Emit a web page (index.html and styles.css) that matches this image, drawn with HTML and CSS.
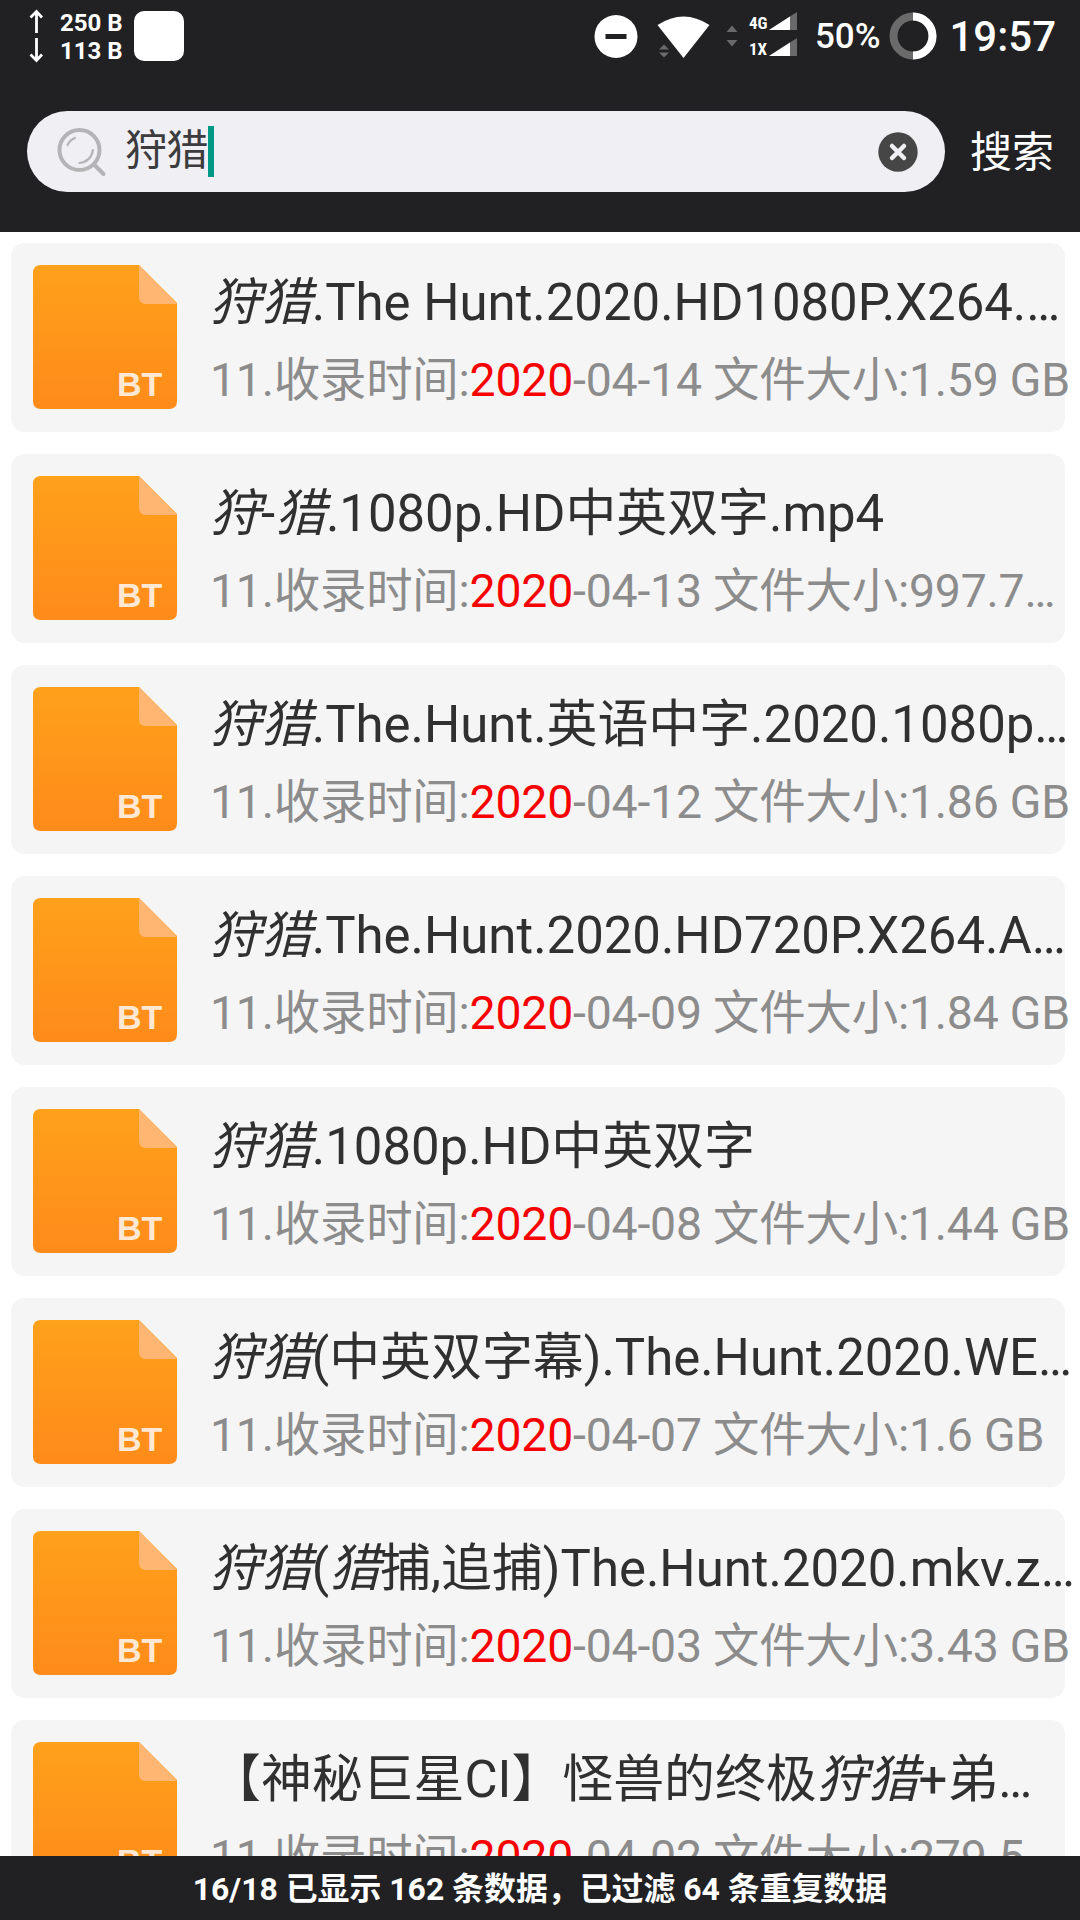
FILE: index.html
```
<!DOCTYPE html>
<html lang="zh-CN">

<head>
    <meta charset="UTF-8" />
    <meta name="viewport" content="width=device-width, initial-scale=1.0" />
    <title>搜索</title>
    <link rel="stylesheet" href="styles.css">
</head>

<body>
    <header class="header">
        <div class="status">
            <svg class="arrows" width="14" height="54" viewBox="0 0 14 54" fill="none" stroke="#fff" stroke-width="2.8">
                <path d="M7.500 24V3M1.500 8.500L7.500 2.500L13 8.500M7.500 29V50M1.500 45.500L7.500 51.500L13 45.500" />
            </svg>
            <div class="speed">
                <span>250 B</span>
                <span>113 B</span>
            </div>
            <div class="app-badge"></div>

            <div class="status-right">
                <svg class="dnd" width="44" height="44" viewBox="0 0 44 44">
                    <circle cx="22" cy="22.500" r="21.500" fill="#fff" />
                    <rect x="11.500" y="20" width="21" height="5" fill="#212123" />
                </svg>
                <svg class="wifi" width="53" height="43" viewBox="0 0 53 43">
                    <path d="M0.500 10Q26.500-7 52.500 10L26.500 43Z" fill="#fff" />
                    <path d="M2 34.500L7 29.500L12 34.500ZM2 37.500H12L7 42.500Z" fill="#6a6a6b" />
                </svg>
                <svg class="updown" width="12" height="22" viewBox="0 0 12 22">
                    <path d="M0.500 7L6 0.500L11.500 7ZM0.500 15H11.500L6 21.500Z" fill="#6a6a6b" />
                </svg>
                <div class="signals">
                    <div class="signal">
                        <span>4G</span>
                        <svg width="28" height="18" viewBox="0 0 28 18">
                            <path d="M0 18L28 0V18Z" fill="#6a6a6b" />
                            <path d="M0 18L21 4.500V18Z" fill="#fff" />
                        </svg>
                    </div>
                    <div class="signal">
                        <span>1X</span>
                        <svg width="28" height="18" viewBox="0 0 28 18">
                            <path d="M0 18L28 0V18Z" fill="#6a6a6b" />
                            <path d="M0 18L21 4.500V18Z" fill="#fff" />
                        </svg>
                    </div>
                </div>
                <span class="percent">50%</span>
                <svg class="battery" width="48" height="48" viewBox="0 0 48 48" fill="none" stroke-width="8">
                    <circle cx="24" cy="24" r="19.500" stroke="#6a6a6b" />
                    <path d="M24 4.500A19.500 19.500 0 0 1 24 43.500" stroke="#fff" />
                </svg>
                <span class="clock">19:57</span>
            </div>
        </div>

        <div class="search">
            <div class="search-box">
                <svg class="search-icon" width="50" height="50" viewBox="0 0 50 50" fill="none" stroke="#b4b4b6" stroke-linecap="round">
                    <circle cx="22.500" cy="23" r="20" stroke-width="4" />
                    <path d="M37 37.500L46.500 47" stroke-width="4" />
                    <path d="M10.500 18Q13 13 18 11M36 23Q34 34.500 22.500 36" stroke-width="2.2" />
                </svg>
                <span class="keyword">狩猎</span>
                <span class="caret"></span>
                <svg class="clear" width="40" height="40" viewBox="0 0 40 40">
                    <circle cx="20" cy="20" r="19.700" fill="#464646" />
                    <path d="M14 14L26 26M26 14L14 26" stroke="#f0f0f4" stroke-width="4.500" stroke-linecap="round" />
                </svg>
            </div>
            <span class="search-btn">搜索</span>
        </div>
    </header>

    <main class="list" id="list"></main>

    <footer class="footer">16/18 已显示 162 条数据，已过滤 64 条重复数据</footer>

    <template id="file-icon">
        <svg class="file" width="144" height="144" viewBox="0 0 144 144">
            <defs>
                <linearGradient id="orange" x1="0" y1="0" x2="0" y2="1">
                    <stop offset="0" stop-color="#ffa11b" />
                    <stop offset="1" stop-color="#ff8b1a" />
                </linearGradient>
            </defs>
            <path d="M8 0H106L144 38V136Q144 144 136 144H8Q0 144 0 136V8Q0 0 8 0Z" fill="url(#orange)" />
            <path d="M106 0L144 39H113Q106 39 106 32Z" fill="#ffb673" />
            <text class="file-type" x="84" y="131">BT</text>
        </svg>
    </template>

    <script>
        let items = [
            { title: "<em>狩猎</em>.The Hunt.2020.HD1080P.X264.…", day: "04-14", size: "1.59 GB" },
            { title: "<em>狩</em>-<em>猎</em>.1080p.HD中英双字.mp4", day: "04-13", size: "997.7…" },
            { title: "<em>狩猎</em>.The.Hunt.英语中字.2020.1080p…", day: "04-12", size: "1.86 GB" },
            { title: "<em>狩猎</em>.The.Hunt.2020.HD720P.X264.A…", day: "04-09", size: "1.84 GB" },
            { title: "<em>狩猎</em>.1080p.HD中英双字", day: "04-08", size: "1.44 GB" },
            { title: "<em>狩猎</em>(中英双字幕).The.Hunt.2020.WE…", day: "04-07", size: "1.6 GB" },
            { title: "<em>狩猎</em>(<em>猎</em>捕,追捕)The.Hunt.2020.mkv.z…", day: "04-03", size: "3.43 GB" },
            { title: "【神秘巨星CI】怪兽的终极<em>狩猎</em>+弟…", day: "04-02", size: "279.5…" }
        ];

        let list = document.getElementById("list");
        let icon = document.getElementById("file-icon").innerHTML;

        items.forEach((item) => {
            let card = document.createElement("div");
            card.className = "card";
            card.innerHTML = `
                ${icon}
                <div class="info">
                    <div class="title">${item.title}</div>
                    <div class="meta">11.收录时间:<span class="year">2020</span>-${item.day} 文件大小:${item.size}</div>
                </div>
            `;
            list.appendChild(card);
        });
    </script>
</body>

</html>
```
FILE: styles.css
```
* {
    box-sizing: border-box;
}

body {
    margin: 0;
    width: 1080px;
    height: 1920px;
    display: flex;
    flex-direction: column;
    overflow: hidden;
    background: #fff;
    font-family: Roboto, "Noto Sans CJK SC", sans-serif;
}

svg {
    display: block;
    flex: none;
}

.header {
    height: 232px;
    flex: none;
    background: #212123;
    color: #fff;
}

/* status bar */
.status {
    display: flex;
    align-items: center;
    height: 72px;
    padding: 0 24px 0 29px;
}

.speed {
    display: flex;
    flex-direction: column;
    width: 63px;
    margin-left: 17px;
    padding-top: 2px;
    font-size: 24px;
    font-weight: 700;
    line-height: 28px;
    white-space: nowrap;
}

.app-badge {
    width: 50px;
    height: 50px;
    margin-left: 11px;
    border-radius: 10px;
    background: #fff;
}

.status-right {
    display: flex;
    align-items: center;
    margin-left: auto;
}

.wifi {
    margin-left: 19px;
}

.updown {
    margin-left: 16px;
}

.signals {
    display: flex;
    flex-direction: column;
    gap: 8px;
    margin: 0 0 4px 11px;
}

.signal {
    display: flex;
    align-items: flex-end;
    height: 18px;
}

.signal span {
    width: 20px;
    font-family: "Roboto Condensed", Roboto, sans-serif;
    font-size: 17px;
    font-weight: 700;
    line-height: 13px;
}

.percent {
    margin-left: 18px;
    padding-top: 2px;
    font-size: 35px;
    font-weight: 500;
    line-height: 72px;
}

.battery {
    margin-left: 9px;
}

.clock {
    margin-left: 12px;
    padding-top: 2px;
    font-size: 42px;
    font-weight: 500;
    line-height: 72px;
}

/* search bar */
.search {
    display: flex;
    align-items: center;
    margin-top: 39px;
    padding-left: 27px;
}

.search-box {
    display: flex;
    align-items: center;
    width: 918px;
    height: 81px;
    padding: 0 27px 0 30px;
    border-radius: 41px;
    background: #f0f0f4;
}

.keyword {
    margin: 0 0 2px 18px;
    font-size: 42px;
    line-height: 60px;
    letter-spacing: -0.5px;
    color: #3c3c3e;
}

.caret {
    width: 6px;
    height: 51px;
    background: #009a84;
}

.clear {
    margin-left: auto;
}

.search-btn {
    margin-left: 25px;
    padding-top: 2px;
    font-size: 42px;
    line-height: 60px;
}

/* results */
.list {
    flex: 1;
    min-height: 0;
    display: flex;
    flex-direction: column;
    gap: 22px;
    padding: 11px 15px 0 11px;
    overflow: hidden;
}

.card {
    display: flex;
    flex: none;
    height: 189px;
    padding: 22px 0 0 22px;
    border-radius: 14px;
    background: #f5f5f5;
}

.file-type {
    font-family: "Liberation Sans", sans-serif;
    font-size: 34px;
    font-weight: 700;
    fill: #ffe8d4;
}

.info {
    margin-left: 33px;
    white-space: nowrap;
}

.title {
    height: 77px;
    font-size: 50.9px;
    line-height: 76px;
    color: #303030;
}

.meta {
    height: 76px;
    font-size: 46.4px;
    line-height: 76px;
    letter-spacing: -0.2px;
    color: #8c8c8c;
}

.year {
    color: #f80000;
}

.footer {
    height: 64px;
    flex: none;
    padding-top: 1px;
    background: #212123;
    color: #fff;
    font-size: 31.9px;
    font-weight: 700;
    line-height: 64px;
    text-align: center;
}
```
